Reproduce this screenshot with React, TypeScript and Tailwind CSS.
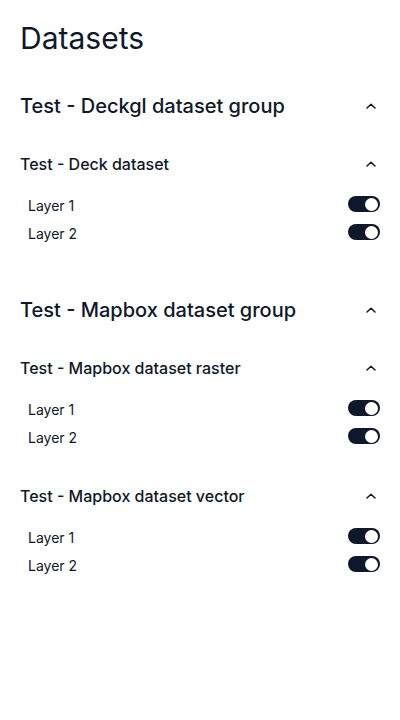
import React from "react";

type Dataset = { name: string; layers: string[] };
type Group = { name: string; datasets: Dataset[] };

const GROUPS: Group[] = [
  {
    name: "Test - Deckgl dataset group",
    datasets: [{ name: "Test - Deck dataset", layers: ["Layer 1", "Layer 2"] }],
  },
  {
    name: "Test - Mapbox dataset group",
    datasets: [
      { name: "Test - Mapbox dataset raster", layers: ["Layer 1", "Layer 2"] },
      { name: "Test - Mapbox dataset vector", layers: ["Layer 1", "Layer 2"] },
    ],
  },
];

function Chevron() {
  return (
    <svg width="10" height="6" viewBox="0 0 10 6" fill="none" className="mr-1">
      <path
        d="M1 5L5 1.2L9 5"
        stroke="#0f172a"
        strokeWidth="1.5"
        strokeLinecap="round"
        strokeLinejoin="round"
      />
    </svg>
  );
}

function Toggle() {
  return (
    <div className="flex h-4 w-8 items-center justify-end rounded-full bg-[#0f172a] p-[2px]">
      <div className="size-[13px] rounded-full bg-white" />
    </div>
  );
}

export default function App() {
  return (
    <div
      className="min-h-screen bg-white px-5 pt-5 text-[#0f172a]"
      style={{ fontFamily: "Inter, 'Noto Sans', sans-serif" }}
    >
      <h1 className="text-[30px] leading-9 font-normal">Datasets</h1>
      <div className="mt-9 flex flex-col gap-12">
        {GROUPS.map((g) => (
          <section key={g.name}>
            <div className="flex h-7 items-center justify-between">
              <h2 className="text-xl leading-7 font-medium">{g.name}</h2>
              <Chevron />
            </div>
            {g.datasets.map((d) => (
              <div key={d.name} className="mt-8">
                <div className="flex h-6 items-center justify-between">
                  <h3 className="text-base leading-6 font-medium">{d.name}</h3>
                  <Chevron />
                </div>
                <div className="mt-[14px] pb-[2px] flex flex-col">
                  {d.layers.map((l) => (
                    <div key={l} className="flex h-7 items-center justify-between pl-2">
                      <span className="text-sm leading-5 pt-[3px]">{l}</span>
                      <Toggle />
                    </div>
                  ))}
                </div>
              </div>
            ))}
          </section>
        ))}
      </div>
    </div>
  );
}
